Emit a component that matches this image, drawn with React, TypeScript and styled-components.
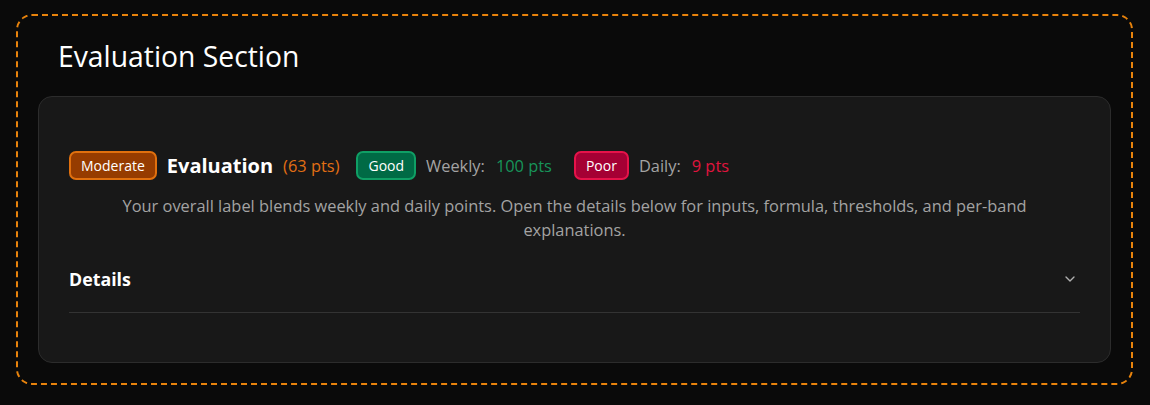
import React from "react";
import styled, { createGlobalStyle } from "styled-components";
import { ChevronDown } from "lucide-react";

const Global = createGlobalStyle`
  html, body { margin: 0; padding: 0; background: #0a0a0a; }
  body { font-family: "Open Sans", "Noto Sans", "Liberation Sans", sans-serif; color: #fff; }
  * { box-sizing: border-box; }
`;

const Page = styled.div`
  padding: 14px 17px 19px 16px;
`;

const Section = styled.section`
  border: 2px dashed #e8830c;
  border-radius: 16px;
  padding: 20px 20px 20px 20px;
  display: flex;
  flex-direction: column;
  gap: 20px;
`;

const Title = styled.h2`
  margin: 0;
  padding: 0 20px;
  font-size: 28.3px;
  font-weight: 400;
  line-height: 40px;
  color: #fff;
`;

const Card = styled.div`
  background: #181818;
  border: 1px solid #2c2c2c;
  border-radius: 14px;
  padding: 54px 30px 49px;
  display: flex;
  flex-direction: column;
`;

const Row = styled.div`
  display: flex;
  align-items: center;
  flex-wrap: wrap;
`;

const tones = {
  orange: { bg: "#963c00", border: "#e0700e", text: "#e26f14" },
  green: { bg: "#006a45", border: "#0f9f65", text: "#17945a" },
  red: { bg: "#a50034", border: "#e6134a", text: "#e0143e" },
} as const;

type Tone = keyof typeof tones;

const Badge = styled.span<{ $tone: Tone }>`
  display: inline-flex;
  align-items: center;
  height: 29px;
  padding: 0 10px;
  border-radius: 7px;
  border: 2px solid ${(p) => tones[p.$tone].border};
  background: ${(p) => tones[p.$tone].bg};
  color: #fff;
  font-size: 14px;
  margin-right: 10px;
`;

const Heading = styled.span`
  font-size: 20px;
  font-weight: 700;
  color: #fff;
  margin-right: 10px;
`;

const Label = styled.span`
  font-size: 16.4px;
  color: #a3a3a3;
  margin-right: 11px;
`;

const Value = styled.span<{ $tone: Tone; $gap: number }>`
  font-size: 16.4px;
  color: ${(p) => tones[p.$tone].text};
  margin-right: ${(p) => p.$gap}px;
`;

const Desc = styled.p`
  margin: 14px 0 0;
  padding: 0 20px;
  text-align: center;
  font-size: 16.4px;
  line-height: 24px;
  color: #a3a3a3;
`;

const DetailsRow = styled.div`
  display: flex;
  align-items: center;
  justify-content: space-between;
  padding: 13px 0 21px;
  border-bottom: 1px solid #333;
  margin-top: 12px;
`;

const DetailsLabel = styled.span`
  font-size: 17.8px;
  font-weight: 700;
  color: #fff;
  line-height: 24px;
`;

const Chevron = styled(ChevronDown)`
  color: #b0b0b0;
  margin-right: 2px;
`;

export default function App() {
  return (
    <>
      <Global />
      <Page>
        <Section>
          <Title>Evaluation Section</Title>
          <Card>
            <Row>
              <Badge $tone="orange">Moderate</Badge>
              <Heading>Evaluation</Heading>
              <Value $tone="orange" $gap={17}>(63 pts)</Value>
              <Badge $tone="green">Good</Badge>
              <Label>Weekly:</Label>
              <Value $tone="green" $gap={22}>100 pts</Value>
              <Badge $tone="red">Poor</Badge>
              <Label>Daily:</Label>
              <Value $tone="red" $gap={0}>9 pts</Value>
            </Row>
            <Desc>
              Your overall label blends weekly and daily points. Open the details below for inputs, formula,
              thresholds, and per-band explanations.
            </Desc>
            <DetailsRow>
              <DetailsLabel>Details</DetailsLabel>
              <Chevron size={16} strokeWidth={2} />
            </DetailsRow>
          </Card>
        </Section>
      </Page>
    </>
  );
}
